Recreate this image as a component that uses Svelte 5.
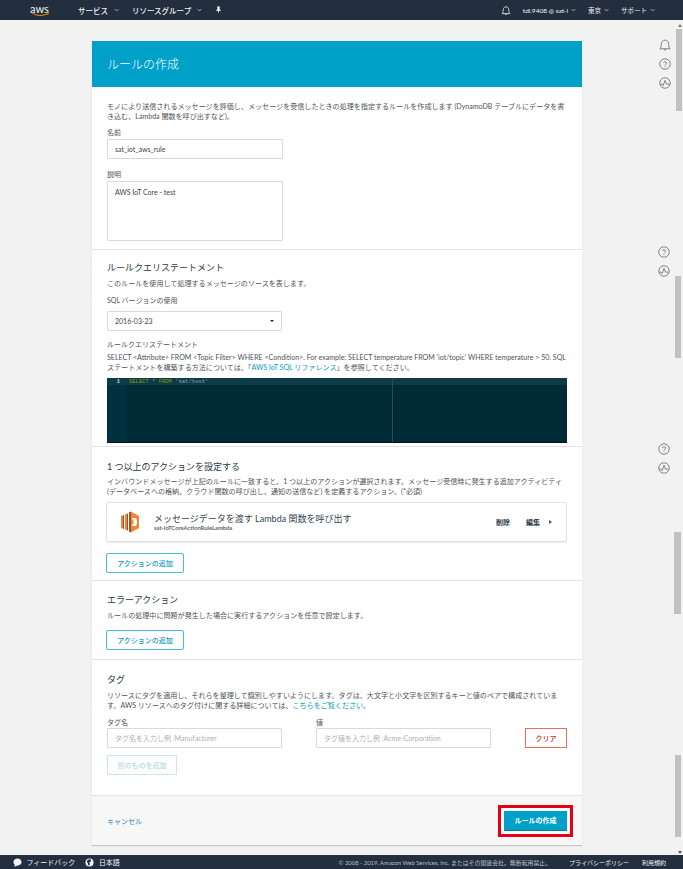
<script>
  const rails = [
    { top: 19, items: ['bell', 'help', 'pulse'], right: 12 },
    { top: 226, items: ['help', 'pulse'], right: 13 },
    { top: 423, items: ['help', 'pulse'], right: 13 }
  ];
  const thumbs = [
    { top: 9, right: 1 },
    { top: 256, right: 2 },
    { top: 512, right: 2.5 },
    { top: 735, right: 2 }
  ];
</script>

{#snippet caret()}
  <svg class="caret" viewBox="0 0 8 5" width="5" height="4"><path d="M1 1l3 3 3-3" fill="none" stroke="#c9d0d6" stroke-width="1.2" /></svg>
{/snippet}

{#snippet railIcon(name)}
  <svg viewBox="0 0 16 16" width="12" height="12" fill="none" stroke="#777" stroke-width="1.2">
    {#if name === 'bell'}
      <path d="M1 13h14c-1.500-1-2-2.500-2-5.500C13 4 11 1.500 8 1.500S3 4 3 7.500c0 3-.5 4.500-2 5.500zM6.500 13c0 2.500 3 2.500 3 0" />
    {:else if name === 'help'}
      <circle cx="8" cy="8" r="7" />
      <path d="M5.800 6.300C6 4.600 10.200 4.400 10.200 6.500c0 1.500-2.200 1.500-2.200 3.300" />
      <path d="M8 11v1.200" />
    {:else}
      <circle cx="8" cy="8" r="7" />
      <path d="M1.500 9.500h2.500l1.500 2 2.500-7 2 5h4" />
    {/if}
  </svg>
{/snippet}

<div class="page">
  <header class="topbar">
    <div class="logo">
      <span class="logo-text">aws</span>
      <svg viewBox="0 0 22 6" width="21" height="5"><path d="M1 1c5 4 13 4 18 1" fill="none" stroke="#f90" stroke-width="1.200" /><path d="M17 .6l3.500 0-1 3" fill="none" stroke="#f90" stroke-width="1" /></svg>
    </div>
    <nav class="nav-left">
      <span class="nav-item">サービス {@render caret()}</span>
      <span class="nav-item">リソースグループ {@render caret()}</span>
      <svg viewBox="0 0 10 10" width="7" height="8"><path d="M3 0h4l-.5 3.500L9 6H5.800L5 10 4 6H1l2.500-2.500z" fill="#f2f3f3" /></svg>
    </nav>
    <nav class="nav-right">
      <svg viewBox="0 0 16 16" width="10" height="11" fill="none" stroke="#e8eaec" stroke-width="1.300"><path d="M1.500 13h13c-1.500-1-2-2.500-2-5.500C12.500 4 10.500 2 8 2S3.500 4 3.500 7.500c0 3-.5 4.500-2 5.500zM6.500 13c0 2 3 2 3 0" /></svg>
      <span class="nav-small user">tdl.9408 @ sat-l {@render caret()}</span>
      <span class="nav-small">東京 {@render caret()}</span>
      <span class="nav-small">サポート {@render caret()}</span>
    </nav>
  </header>

  <main class="content">
    <section class="card">
      <h1 class="card-title">ルールの作成</h1>

      <div class="section first">
        <p class="text">モノにより送信されるメッセージを評価し、メッセージを受信したときの処理を指定するルールを作成します (DynamoDB テーブルにデータを書き込む、Lambda 関数を呼び出すなど)。</p>
        <label class="label name-label" for="rule-name">名前</label>
        <input id="rule-name" class="field" value="sat_iot_aws_rule" />
        <label class="label desc-label" for="rule-desc">説明</label>
        <textarea id="rule-desc" class="field area">AWS IoT Core - test</textarea>
      </div>

      <div class="section query">
        <h2 class="heading">ルールクエリステートメント</h2>
        <p class="text">このルールを使用して処理するメッセージのソースを表します。</p>
        <div class="label sql-label">SQL バージョンの使用</div>
        <div class="field select"><span>2016-03-23</span><i class="select-arrow"></i></div>
        <div class="label stmt-label">ルールクエリステートメント</div>
        <p class="text">SELECT &lt;Attribute&gt; FROM &lt;Topic Filter&gt; WHERE &lt;Condition&gt;. For example: SELECT temperature FROM 'iot/topic' WHERE temperature &gt; 50. SQL ステートメントを構築する方法については、「<a href="#top">AWS IoT SQL リファレンス</a>」を参照してください。</p>
        <div class="editor">
          <div class="gutter"><span class="gutter-line">1</span></div>
          <div class="code">
            <div class="code-line"><span class="kw">SELECT</span> * <span class="kw">FROM</span> 'sat/test'</div>
            <i class="print-margin"></i>
          </div>
        </div>
      </div>

      <div class="section actions">
        <h2 class="heading">1 つ以上のアクションを設定する</h2>
        <p class="text">インバウンドメッセージが上記のルールに一致すると、1 つ以上のアクションが選択されます。メッセージ受信時に発生する追加アクティビティ (データベースへの格納、クラウド関数の呼び出し、通知の送信など) を定義するアクション。(*必須)</p>
        <div class="action-row">
          <svg class="lambda" viewBox="0 0 18 22" width="18" height="22">
            <path d="M0 5l2-.7v13.400l-2-.7z" fill="#f58536" />
            <path d="M2 4.300l1-.3v14l-1-.3z" fill="#9d5025" />
            <path d="M4 3.500l2-.7v16.400l-2-.7z" fill="#f58536" />
            <path d="M6 2.800l1-.3v17l-1-.3z" fill="#9d5025" />
            <path d="M8 1.500L10 .5v21l-2-1z" fill="#9d5025" />
            <path d="M10 .5l8 4.500v12l-8 4.500z" fill="#f58536" />
            <path d="M11 7h2.500c2 0 2.500 1.500 2.500 4s-.5 4-2.500 4H11v-1.500h1.500V8.500H11z" fill="#fff" />
          </svg>
          <div class="action-names">
            <div class="action-title">メッセージデータを渡す Lambda 関数を呼び出す</div>
            <div class="action-sub">sat-IoTCoreActionRuleLambda</div>
          </div>
          <span class="action-link del">削除</span>
          <span class="action-link">編集</span>
          <i class="action-arrow"></i>
        </div>
        <button class="btn">アクションの追加</button>
      </div>

      <div class="section errors">
        <h2 class="heading">エラーアクション</h2>
        <p class="text">ルールの処理中に問題が発生した場合に実行するアクションを任意で設定します。</p>
        <button class="btn">アクションの追加</button>
      </div>

      <div class="section tags">
        <h2 class="heading">タグ</h2>
        <p class="text">リソースにタグを適用し、それらを整理して識別しやすいようにします。タグは、大文字と小文字を区別するキーと値のペアで構成されています。AWS リソースへのタグ付けに関する詳細については、<a href="#top">こちらをご覧ください</a>。</p>
        <div class="tag-row">
          <div class="tag-col">
            <label class="label" for="tag-key">タグ名</label>
            <input id="tag-key" class="field" placeholder="タグ名を入力し例 :Manufacturer" />
          </div>
          <div class="tag-col">
            <label class="label" for="tag-val">値</label>
            <input id="tag-val" class="field" placeholder="タグ値を入力し例 :Acme-Corporation" />
          </div>
          <button class="btn clear">クリア</button>
        </div>
        <button class="btn faded">別のものを追加</button>
      </div>

      <div class="card-foot">
        <a class="cancel" href="#top">キャンセル</a>
        <button class="btn primary">ルールの作成</button>
      </div>
    </section>

    {#each rails as rail}
      <div class="rail" style="top: {rail.top}px; right: {rail.right}px">
        {#each rail.items as item}
          {@render railIcon(item)}
        {/each}
      </div>
    {/each}
    {#each thumbs as t}
      <i class="thumb" style="top: {t.top}px; right: {t.right}px"></i>
    {/each}
    <i class="arrow up"></i>
    <i class="arrow down"></i>
  </main>

  <footer class="bottombar">
    <span class="foot-item">
      <svg viewBox="0 0 10 10" width="9" height="9"><path d="M5 .5c2.500 0 4.500 1.800 4.500 4S7.500 8.500 5 8.500H4L1.500 10l.5-2.300C1 7 .5 5.800.5 4.500.5 2.300 2.500.5 5 .5z" fill="#f2f3f3" /></svg>
      フィードバック
    </span>
    <span class="foot-item">
      <svg viewBox="0 0 10 10" width="9" height="9"><circle cx="5" cy="5" r="4.500" fill="#f2f3f3" /><path d="M3 2l3-.5 1 2-2 1 .5 3-1.500 1-1-3-1-1.500z" fill="#232f3e" /></svg>
      日本語
    </span>
    <span class="copyright">© 2008 - 2019, Amazon Web Services, Inc. またはその関連会社。無断転用禁止。</span>
    <span class="foot-link">プライバシーポリシー</span>
    <span class="foot-link">利用規約</span>
  </footer>
</div>

<style>
  :global(body) {
    margin: 0;
    background: #f2f2f2;
  }
  .page {
    width: 683px;
    height: 869px;
    display: flex;
    flex-direction: column;
    overflow: hidden;
    font-family: "Lato", "Noto Sans CJK JP", sans-serif;
    font-size: 7px;
    color: #444;
  }
  .topbar {
    height: 20px;
    flex: none;
    display: flex;
    align-items: center;
    background: #232f3e;
    color: #f2f3f3;
    padding: 0 28px 0 30px;
    box-sizing: border-box;
  }
  .logo {
    width: 48px;
    display: flex;
    flex-direction: column;
    align-items: flex-start;
    line-height: 8px;
  }
  .logo-text {
    font-size: 11px;
    line-height: 9px;
    margin-bottom: -1px;
  }
  .nav-left {
    display: flex;
    align-items: center;
    gap: 13px;
  }
  .nav-item {
    display: flex;
    align-items: center;
    gap: 6px;
    font-size: 7.500px;
    font-weight: 500;
    white-space: nowrap;
  }
  .nav-right {
    margin-left: auto;
    display: flex;
    align-items: center;
    gap: 12px;
  }
  .nav-small {
    display: flex;
    align-items: center;
    gap: 3px;
    font-size: 6.500px;
    white-space: nowrap;
  }
  .content {
    position: relative;
    flex: 1;
    min-height: 0;
    padding: 21px 0 0 92px;
  }
  .card {
    width: 490px;
    background: #fff;
    box-shadow: 0 1px 1px rgba(0, 0, 0, 0.18);
  }
  .card-title {
    margin: 0;
    height: 46px;
    padding: 0 15px 2px;
    box-sizing: border-box;
    display: flex;
    align-items: center;
    background: #00a1c9;
    color: #fff;
    font-size: 12px;
    font-weight: 300;
  }
  .section {
    padding: 0 15px;
    border-bottom: 1px solid #e1e4e4;
    box-sizing: border-box;
  }
  .first { height: 163px; padding-top: 15px; }
  .query { height: 197px; padding-top: 11px; }
  .actions { height: 134px; padding-top: 13px; }
  .errors { height: 79px; padding-top: 12px; }
  .tags { height: 136px; padding-top: 13px; }
  .heading {
    margin: 0 0 4px;
    font-size: 9px;
    line-height: 14px;
    font-weight: 400;
    color: #2b3a45;
  }
  .actions .heading {
    margin-bottom: 3px;
  }
  .text {
    margin: 0;
    font-size: 7.070px;
    line-height: 10px;
    color: #4f5358;
  }
  .text a {
    display: inline-block;
    line-height: 10px;
    color: #0a9ac0;
    text-decoration: none;
  }
  .label {
    display: block;
    font-size: 7px;
    line-height: 10px;
    color: #4f5358;
  }
  .name-label { margin: 5px 0 2px; }
  .desc-label { margin: 10px 0 2px; }
  .sql-label { margin: 6px 0 6px; }
  .stmt-label { margin: 8px 0 4px; }
  .field {
    display: block;
    box-sizing: border-box;
    width: 176px;
    height: 20px;
    padding: 0 7px;
    border: 1px solid #d5dbdb;
    border-radius: 1px;
    background: #fff;
    font: inherit;
    color: #444;
    outline: none;
  }
  .field::placeholder {
    color: #aab2b5;
  }
  .area {
    height: 60px;
    padding: 6px 7px;
    resize: none;
  }
  .select {
    width: 175px;
    display: flex;
    align-items: center;
    justify-content: space-between;
  }
  .select-arrow {
    border: 2.500px solid transparent;
    border-top: 2.500px solid #222;
    border-bottom: 0;
  }
  .editor {
    display: flex;
    height: 65px;
    margin-top: 5px;
    background: #002b36;
    border-bottom: 1px solid #111;
    box-sizing: border-box;
    width: 460px;
    font-family: "Liberation Mono", monospace;
    font-size: 5.500px;
  }
  .gutter {
    width: 20px;
    background: #01313f;
  }
  .gutter-line {
    display: block;
    height: 7px;
    line-height: 7px;
    text-align: right;
    padding-right: 7px;
    background: #0d3b48;
    color: #c5d0d2;
    font-weight: bold;
  }
  .code {
    position: relative;
    flex: 1;
  }
  .code-line {
    height: 7px;
    line-height: 7px;
    padding-left: 2px;
    background: #0d3b48;
    color: #8fa1a5;
    white-space: pre;
  }
  .kw {
    color: #859900;
  }
  .print-margin {
    position: absolute;
    top: 0;
    bottom: 0;
    left: 265px;
    width: 1px;
    background: #2a4c55;
  }
  .action-row {
    display: flex;
    align-items: center;
    height: 40px;
    margin: 5px 0 0 -1px;
    padding: 0 14px 0 14px;
    border: 1px solid #dfe2e2;
    border-radius: 2px;
    box-sizing: border-box;
    width: 461px;
    box-shadow: 0 1px 1px rgba(0, 0, 0, 0.08);
  }
  .lambda {
    flex: none;
  }
  .action-names {
    flex: 1;
    margin-left: 15px;
  }
  .action-title {
    font-size: 9px;
    line-height: 11px;
    color: #33454f;
  }
  .action-sub {
    font-size: 5.800px;
    line-height: 7px;
    font-weight: 700;
    color: #666;
  }
  .action-link {
    font-size: 7px;
    font-weight: 700;
    color: #2b3a45;
  }
  .del {
    margin-right: 16px;
  }
  .action-arrow {
    margin-left: 9px;
    border: 2.500px solid transparent;
    border-left: 3px solid #555;
    border-right: 0;
  }
  .btn {
    display: block;
    box-sizing: border-box;
    width: 78px;
    height: 20px;
    padding: 0;
    margin: 11px 0 0 -1px;
    border: 1px solid #45bdd8;
    border-radius: 2px;
    background: #fff;
    color: #149bc1;
    font: inherit;
    font-weight: 500;
  }
  .errors .btn {
    margin-top: 9px;
  }
  .tag-row {
    display: flex;
    align-items: flex-end;
    margin-top: 6px;
  }
  .tag-col {
    width: 209px;
  }
  .tag-col .label {
    margin-bottom: 1px;
  }
  .tag-col .field {
    width: 175px;
  }
  .clear {
    width: 42px;
    height: 20px;
    margin: 0;
    border-color: #e8705a;
    border-radius: 0;
    color: #d13212;
  }
  .faded {
    width: 70px;
    height: 20px;
    margin: 7px 0 0;
    border-color: #c4e9f2;
    border-radius: 0;
    color: #b6d9e3;
  }
  .card-foot {
    height: 49px;
    display: flex;
    align-items: center;
    justify-content: space-between;
    padding: 0 15px;
    background: #f7f7f7;
    box-sizing: border-box;
  }
  .cancel {
    color: #3a85b4;
    text-decoration: none;
    font-size: 7px;
  }
  .primary {
    width: 63px;
    height: 20px;
    margin: 0;
    background: #00a1c9;
    border: 0;
    border-bottom: 1px solid #0a7f9c;
    color: #fff;
    box-shadow: 0 0 0 3px #fff, 0 0 0 6px #e60012;
    border-radius: 0;
    font-weight: 700;
  }
  .rail {
    position: absolute;
    display: flex;
    flex-direction: column;
    gap: 7px;
  }
  .thumb {
    position: absolute;
    width: 6.500px;
    height: 82px;
    background: #c1c1c1;
  }
  .arrow {
    position: absolute;
    right: 1px;
    border: 2px solid transparent;
  }
  .up {
    top: 4px;
    border-bottom: 3px solid #777;
    border-top: 0;
  }
  .down {
    bottom: 1px;
    border-top: 3px solid #555;
    border-bottom: 0;
  }
  .bottombar {
    height: 14px;
    flex: none;
    display: flex;
    align-items: center;
    gap: 10px;
    padding: 0 17px 0 13px;
    background: #232f3e;
    color: #f2f3f3;
    box-sizing: border-box;
    font-size: 7px;
  }
  .foot-item {
    display: flex;
    align-items: center;
    gap: 4.500px;
    white-space: nowrap;
  }
  .copyright {
    margin-left: auto;
    font-size: 5.900px;
    color: #b9bfc5;
    white-space: nowrap;
    margin-right: 5px;
  }
  .foot-link {
    font-size: 6px;
    white-space: nowrap;
    margin-left: 3px;
  }
</style>
